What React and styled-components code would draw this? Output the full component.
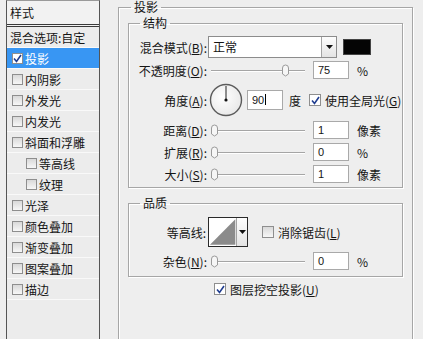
import React from "react";
import styled, { createGlobalStyle } from "styled-components";

const GlobalStyle = createGlobalStyle`
  html, body {
    margin: 0;
    padding: 0;
    background: #eeeeee;
  }
  body {
    font-family: "Noto Sans CJK SC", "Liberation Sans", sans-serif;
    font-size: 12px;
    color: #151515;
  }
`;

const Window = styled.div`
  display: flex;
  width: 423px;
  height: 339px;
  overflow: hidden;
  background: #eeeeee;
`;

// ---------- left list ----------
const Sidebar = styled.div`
  flex-shrink: 0;
  margin-left: 6px;
  width: 94px;
  height: 350px;
  box-sizing: border-box;
  border: 1px solid #555;
  border-top-color: #9a9a9a;
  background: #ececec;
`;

const SideHead = styled.div`
  height: 23px;
  line-height: 23px;
  padding-left: 3px;
  border-bottom: 3px double #3a3a3a;
  background: #f2f2f2;
`;

const SideRow = styled.div`
  display: flex;
  align-items: center;
  gap: 2px;
  height: 20px;
  padding-left: ${(p) => (p.$sub ? 19 : p.$plain ? 3 : 5)}px;
  border-bottom: 1px solid #f9f9f9;
  background: ${(p) => (p.$active ? "#3896f3" : "transparent")};
  color: ${(p) => (p.$active ? "#fff" : "#151515")};
  white-space: nowrap;
`;

const Box = styled.span`
  flex-shrink: 0;
  display: inline-flex;
  align-items: center;
  justify-content: center;
  box-sizing: border-box;
  width: ${(p) => p.$size || 11}px;
  height: ${(p) => p.$size || 11}px;
  border: 1px solid #8e8e8e;
  background: ${(p) =>
    p.$white ? "#fff" : "linear-gradient(#d9d9d9, #f7f7f7)"};
`;

const Check = ({ checked, white, size }) => (
  <Box $white={white || checked} $size={size}>
    {checked && (
      <svg width="9" height="9" viewBox="0 0 9 9">
        <path d="M1 4.5 L3.5 7.5 L8 1" fill="none" stroke="#1f3c8f" strokeWidth="1.6" />
      </svg>
    )}
  </Box>
);

// ---------- right panel ----------
const Main = styled.div`
  flex: 1;
  padding-left: 18px;
`;

const Group = styled.fieldset`
  box-sizing: border-box;
  margin: ${(p) => p.$mt || 0}px 0 0;
  padding: 0 ${(p) => p.$px || 0}px 0;
  width: ${(p) => p.$w}px;
  min-height: ${(p) => p.$minH || 0}px;
  border: 1px solid #a6a6a6;
  box-shadow: inset 1px 1px 0 #fff, 1px 1px 0 #fff;
  min-inline-size: 0;
`;

const Legend = styled.legend`
  margin-left: ${(p) => p.$ml}px;
  padding: 0 3px;
  font-size: 12px;
  line-height: 14px;
`;

const Body = styled.div`
  display: flex;
  flex-direction: column;
  gap: 2px;
  padding-top: ${(p) => p.$pt || 0}px;
  padding-bottom: ${(p) => p.$pb || 0}px;
`;

const Row = styled.div`
  display: flex;
  align-items: center;
  height: ${(p) => p.$h || 20}px;
  margin-top: ${(p) => p.$mt || 0}px;
  padding-left: ${(p) => p.$pl || 0}px;
  white-space: nowrap;
`;

const Label = styled.div`
  width: ${(p) => p.$w || 78}px;
  text-align: right;
  flex-shrink: 0;
`;

const Select = styled.div`
  display: flex;
  box-sizing: border-box;
  margin-left: 1px;
  width: 129px;
  height: 22px;
  border: 1px solid #8c8c8c;
  background: #fff;
`;

const SelectText = styled.div`
  flex: 1;
  padding-left: 4px;
  line-height: 20px;
`;

const DropBtn = styled.div`
  display: flex;
  align-items: center;
  justify-content: center;
  width: ${(p) => p.$w || 14}px;
  border-left: 1px solid #a3a3a3;
  background: linear-gradient(#fdfdfd, #e3e3e3);
`;

const Arrow = () => (
  <svg width="7" height="4" viewBox="0 0 7 4">
    <path d="M0 0 H7 L3.5 4 Z" fill="#111" />
  </svg>
);

const Swatch = styled.div`
  margin-left: 6px;
  width: 28px;
  height: 16px;
  background: #050505;
  border: 1px solid #444;
  box-sizing: border-box;
`;

const Field = styled.div`
  box-sizing: border-box;
  margin-left: ${(p) => p.$ml ?? 8}px;
  width: 36px;
  height: ${(p) => p.$h || 18}px;
  padding-left: 4px;
  border: 1px solid #a9a9a9;
  background: #fff;
  font-family: "Liberation Sans", sans-serif;
  font-size: 11px;
  line-height: ${(p) => (p.$h || 18) - 2}px;
`;

const Caret = styled.span`
  display: inline-block;
  width: 1px;
  height: 11px;
  margin-left: 1px;
  vertical-align: -1px;
  background: #000;
`;

const Unit = styled.span`
  margin-left: ${(p) => p.$ml ?? 8}px;
`;

const Track = styled.div`
  position: relative;
  margin-left: 2px;
  width: 96px;
  height: 20px;
  &::before {
    content: "";
    position: absolute;
    left: 2px;
    right: 0;
    top: 10px;
    height: 1px;
    background: #a5a5a5;
    box-shadow: 0 1px 0 #fff;
  }
`;

const Thumb = styled.svg`
  position: absolute;
  top: 4px;
`;

const Slider = ({ value }) => (
  <Track>
    <Thumb width="9" height="13" viewBox="0 0 9 13" style={{ left: 1 + value * 86 }}>
      <path
        d="M1.5 4 Q1.5 1 4.5 1 Q7.5 1 7.5 4 L7.5 10 L4.5 12 L1.5 10 Z"
        fill="#f6f6f6"
        stroke="#9a9a9a"
      />
    </Thumb>
  </Track>
);

const Dial = () => (
  <svg width="34" height="34" viewBox="0 0 34 34" style={{ marginLeft: 2 }}>
    <defs>
      <radialGradient id="dialFill" cx="0.4" cy="0.4" r="0.7">
        <stop offset="0" stopColor="#ffffff" />
        <stop offset="1" stopColor="#e6e6e6" />
      </radialGradient>
    </defs>
    <circle cx="17" cy="17" r="15.5" fill="url(#dialFill)" stroke="#5b5b5b" strokeWidth="1.4" />
    <line x1="17" y1="17" x2="17" y2="3" stroke="#222" strokeWidth="1" />
    <circle cx="17" cy="17" r="1.6" fill="#111" />
  </svg>
);

const CheckLabel = styled.span`
  display: inline-flex;
  align-items: center;
  gap: 4px;
  margin-left: ${(p) => p.$ml || 0}px;
`;

const Contour = styled.div`
  display: flex;
  box-sizing: border-box;
  margin-left: 2px;
  width: 40px;
  height: 30px;
  border: 1px solid #2a2a2a;
  background: #fff;
`;

const ContourShape = () => (
  <svg width="28" height="28" viewBox="0 0 28 28">
    <polygon points="1,27 27,1 27,27" fill="#8b8b8b" />
  </svg>
);

const Hot = styled.u`
  text-underline-offset: 1px;
`;

const sideItems = [
  { t: "内阴影" },
  { t: "外发光" },
  { t: "内发光" },
  { t: "斜面和浮雕" },
  { t: "等高线", sub: true },
  { t: "纹理", sub: true },
  { t: "光泽" },
  { t: "颜色叠加" },
  { t: "渐变叠加" },
  { t: "图案叠加" },
  { t: "描边" },
];

export default function App() {
  return (
    <>
      <GlobalStyle />
      <Window>
        <Sidebar>
          <SideHead>样式</SideHead>
          <SideRow $plain>混合选项:自定</SideRow>
          <SideRow $active>
            <Check checked />
            投影
          </SideRow>
          {sideItems.map((it) => (
            <SideRow key={it.t} $sub={it.sub}>
              <Check />
              {it.t}
            </SideRow>
          ))}
        </Sidebar>

        <Main>
          <Group $w={295} $px={9} $minH={360}>
            <Legend $ml={3}>投影</Legend>

            <Group $w={275} $mt={2}>
              <Legend $ml={11}>结构</Legend>
              <Body $pt={6} $pb={3}>
                <Row $h={22}>
                  <Label>
                    混合模式(<Hot>B</Hot>):
                  </Label>
                  <Select>
                    <SelectText>正常</SelectText>
                    <DropBtn>
                      <Arrow />
                    </DropBtn>
                  </Select>
                  <Swatch />
                </Row>
                <Row>
                  <Label>
                    不透明度(<Hot>O</Hot>):
                  </Label>
                  <Slider value={0.82} />
                  <Field>75</Field>
                  <Unit>%</Unit>
                </Row>
                <Row $h={36}>
                  <Label>
                    角度(<Hot>A</Hot>):
                  </Label>
                  <Dial />
                  <Field $ml={4} $h={20}>
                    90
                    <Caret />
                  </Field>
                  <Unit $ml={6}>度</Unit>
                  <CheckLabel $ml={8}>
                    <Check checked size={12} />
                    <span>
                      使用全局光(<Hot>G</Hot>)
                    </span>
                  </CheckLabel>
                </Row>
                <Row>
                  <Label>
                    距离(<Hot>D</Hot>):
                  </Label>
                  <Slider value={0} />
                  <Field>1</Field>
                  <Unit>像素</Unit>
                </Row>
                <Row>
                  <Label>
                    扩展(<Hot>R</Hot>):
                  </Label>
                  <Slider value={0} />
                  <Field>0</Field>
                  <Unit>%</Unit>
                </Row>
                <Row>
                  <Label>
                    大小(<Hot>S</Hot>):
                  </Label>
                  <Slider value={0} />
                  <Field>1</Field>
                  <Unit>像素</Unit>
                </Row>
              </Body>
            </Group>

            <Group $w={275} $mt={8}>
              <Legend $ml={11}>品质</Legend>
              <Body $pt={7} $pb={5}>
                <Row $h={30}>
                  <Label $w={77}>等高线:</Label>
                  <Contour>
                    <ContourShape />
                    <DropBtn $w={10}>
                      <Arrow />
                    </DropBtn>
                  </Contour>
                  <CheckLabel $ml={14}>
                    <Check size={12} />
                    <span>
                      消除锯齿(<Hot>L</Hot>)
                    </span>
                  </CheckLabel>
                </Row>
                <Row $mt={2}>
                  <Label>
                    杂色(<Hot>N</Hot>):
                  </Label>
                  <Slider value={0} />
                  <Field>0</Field>
                  <Unit>%</Unit>
                </Row>
              </Body>
            </Group>

            <Row $mt={2} $pl={86}>
              <CheckLabel>
                <Check checked size={12} />
                <span>
                  图层挖空投影(<Hot>U</Hot>)
                </span>
              </CheckLabel>
            </Row>
          </Group>
        </Main>
      </Window>
    </>
  );
}
